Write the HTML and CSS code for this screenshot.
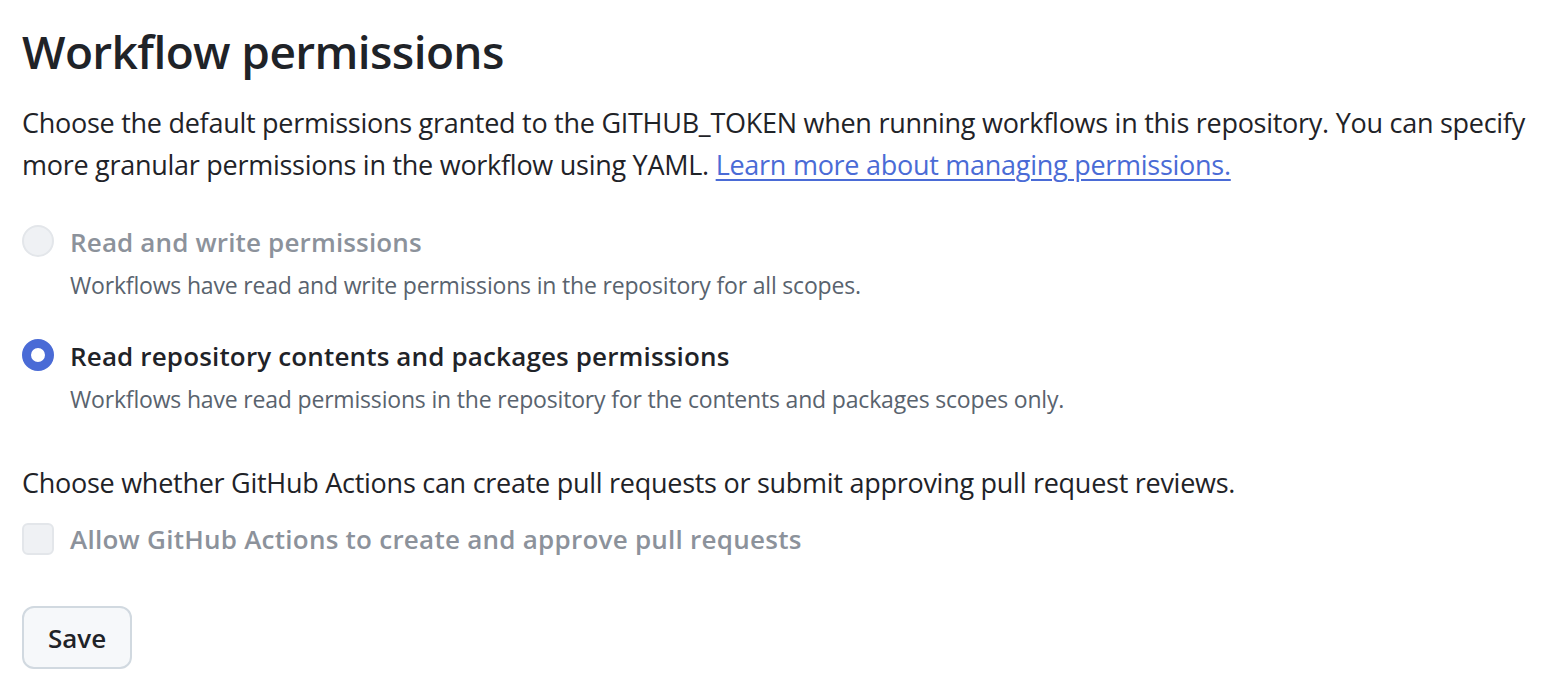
FILE: index.html
```html
<!DOCTYPE html>
<html lang="en">
<head>
<meta charset="utf-8">
<title>Workflow permissions</title>
<link rel="stylesheet" href="styles.css">
</head>
<body>
<main class="page">
  <h2 class="title">Workflow permissions</h2>
  <p class="intro">Choose the default permissions granted to the GITHUB_TOKEN when running workflows in this repository. You can specify more granular permissions in the workflow using YAML. <a href="#" class="link">Learn more about managing permissions.</a></p>

  <div class="options">
    <div class="option">
      <span class="radio radio-disabled"></span>
      <div class="option-body">
        <div class="option-label disabled">Read and write permissions</div>
        <div class="option-desc">Workflows have read and write permissions in the repository for all scopes.</div>
      </div>
    </div>
    <div class="option">
      <span class="radio radio-checked"></span>
      <div class="option-body">
        <div class="option-label">Read repository contents and packages permissions</div>
        <div class="option-desc">Workflows have read permissions in the repository for the contents and packages scopes only.</div>
      </div>
    </div>
  </div>

  <p class="question">Choose whether GitHub Actions can create pull requests or submit approving pull request reviews.</p>
  <div class="check-row">
    <span class="checkbox"></span>
    <span class="option-label disabled wide">Allow GitHub Actions to create and approve pull requests</span>
  </div>

  <button class="btn" type="button">Save</button>
</main>
</body>
</html>
```

FILE: styles.css
```css
* { box-sizing: border-box; }
html, body { margin: 0; padding: 0; background: #ffffff; }
body {
  font-family: "Open Sans", "Noto Sans", "Liberation Sans", sans-serif;
  color: #1f2328;
}
.page {
  padding: 16px 22px 0 22px;
}
.title {
  margin: 0;
  font-size: 46px;
  font-weight: 600;
  line-height: 70px;
  letter-spacing: -0.6px;
}
.intro {
  margin: 16px 0 0 0;
  font-size: 27px;
  line-height: 42px;
  letter-spacing: -0.27px;
}
.link {
  color: #4a6bd6;
  text-decoration: underline;
  text-underline-offset: 4px;
  text-decoration-thickness: 2px;
}
.options {
  margin-top: 30px;
  display: flex;
  flex-direction: column;
  gap: 28px;
}
.option {
  display: flex;
  gap: 16px;
  align-items: flex-start;
}
.radio {
  flex: none;
  width: 32px;
  height: 32px;
  border-radius: 50%;
  margin-top: 9px;
}
.radio-disabled {
  background: #eff1f4;
  border: 2px solid #e3e6ea;
}
.radio-checked {
  background: #ffffff;
  border: 9px solid #4a6bd6;
}
.option-label {
  font-size: 26px;
  font-weight: 600;
  line-height: 52px;
  letter-spacing: 0.15px;
  color: #1f2328;
}
.option-label.disabled { color: #8c929b; }
.option-label.wide { letter-spacing: 0.25px; }
.option-desc {
  font-size: 23px;
  line-height: 34px;
  color: #59636e;
  letter-spacing: -0.18px;
}
.question {
  margin: 46px 0 0 0;
  font-size: 27px;
  line-height: 42px;
  letter-spacing: -0.27px;
}
.check-row {
  display: flex;
  gap: 16px;
  align-items: center;
  margin-top: 9px;
}
.checkbox {
  flex: none;
  width: 32px;
  height: 32px;
  border-radius: 6px;
  background: #eff1f4;
  border: 2px solid #e3e6ea;
}
.btn {
  display: block;
  margin-top: 41px;
  width: 110px;
  height: 63px;
  border: 2px solid #d1d9e0;
  border-radius: 12px;
  background: #f6f8fa;
  color: #1f2328;
  font-family: inherit;
  font-size: 26px;
  font-weight: 600;
  padding: 0;
}
```
